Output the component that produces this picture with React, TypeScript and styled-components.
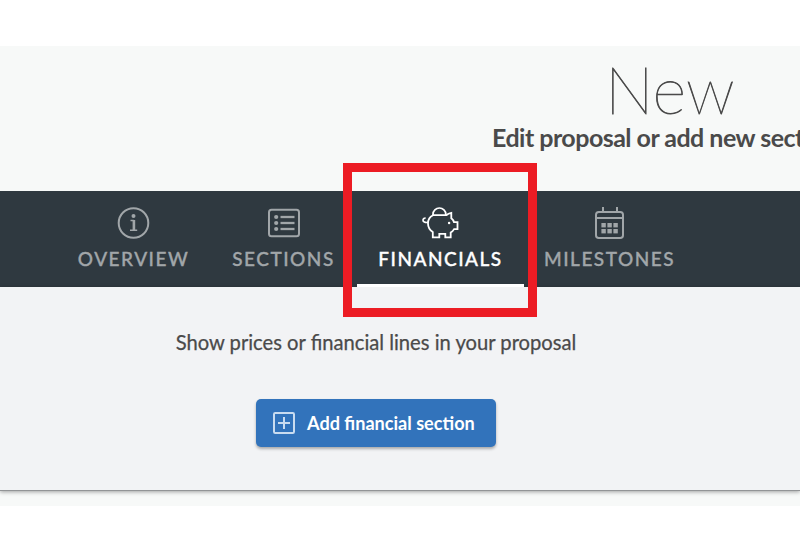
import React from "react";
import styled, { createGlobalStyle } from "styled-components";

const GlobalStyle = createGlobalStyle`
  * { box-sizing: border-box; }
  body { margin: 0; background: #fff; overflow: hidden; font-family: Lato, sans-serif; color: #4a4a4a; }
`;

const Page = styled.div`
  position: relative;
  width: 800px;
  height: 544px;
  padding: 46px 0 38px;
  overflow: hidden;
`;

const Proposal = styled.main`
  height: 460px;
  background: #f7f9f8;
`;

const Header = styled.header`
  height: 145px;
  padding-top: 10px;
  overflow: hidden;
`;

const Title = styled.h1`
  margin: 0 0 0 605px;
  font-size: 65px;
  line-height: 66px;
  font-weight: 100;
  color: #4a4a4a;
  -webkit-text-stroke: 0.8px #4a4a4a;
`;

const Subtitle = styled.p`
  margin: 0 0 0 492px;
  font-size: 25px;
  line-height: 30px;
  font-weight: 700;
  letter-spacing: -0.52px;
  white-space: nowrap;
`;

const Nav = styled.nav`
  display: flex;
  height: 96px;
  padding-left: 57px;
  background: #2f3940;
`;

const Tab = styled.a<{ $width: number; $active?: boolean }>`
  display: flex;
  flex-direction: column;
  align-items: center;
  width: ${(p) => p.$width}px;
  padding-top: 14px;
  border-bottom: 3px solid ${(p) => (p.$active ? "#fff" : "transparent")};
  color: ${(p) => (p.$active ? "#fff" : "#a1a6a9")};
`;

const TabIcon = styled.svg`
  width: 40px;
  height: 36px;
  fill: none;
  stroke: currentColor;
  stroke-width: 2;
`;

const TabLabel = styled.span`
  margin-top: 6px;
  font-size: 19px;
  line-height: 24px;
  font-weight: 500;
  letter-spacing: 1.5px;
  -webkit-text-stroke: 0.35px currentColor;
  white-space: nowrap;
`;

const Panel = styled.section`
  display: flex;
  flex-direction: column;
  align-items: center;
  height: 204px;
  padding: 43px 48px 0 0;
  background: #f2f3f5;
  border-bottom: 1px solid #929496;
  box-shadow: 0 1px 4px rgba(0, 0, 0, 0.35);
`;

const Hint = styled.p`
  margin: 0 0 44px;
  font-size: 20.2px;
  line-height: 25px;
  -webkit-text-stroke: 0.25px currentColor;
  white-space: nowrap;
`;

const AddButton = styled.button`
  display: flex;
  align-items: center;
  gap: 12px;
  width: 240px;
  height: 48px;
  padding: 0 0 0 17px;
  border: 0;
  border-radius: 5px;
  background: #3273bb;
  box-shadow: 0 2px 3px rgba(0, 0, 0, 0.3);
  color: #fff;
  font: 700 18.1px/24px Lato, sans-serif;
  white-space: nowrap;
`;

const PlusIcon = styled.svg`
  width: 22px;
  height: 22px;
  fill: none;
  stroke: #c9dcf0;
  stroke-width: 2;
`;

const Highlight = styled.div`
  position: absolute;
  left: 343px;
  top: 163px;
  width: 194px;
  height: 154px;
  border: 9px solid #ec1c24;
  pointer-events: none;
`;

const InfoGlyph = () => (
  <TabIcon viewBox="0 0 40 36">
    <circle cx="19.5" cy="18" r="14.8" />
    <circle cx="19.5" cy="11" r="2" fill="currentColor" stroke="none" />
    <path strokeWidth="2.6" d="M19.9 15v10.5" />
    <path strokeWidth="1.6" d="M16.5 15.5h3.4M16 25.2h7.2" />
  </TabIcon>
);

const ListGlyph = () => (
  <TabIcon viewBox="0 0 40 36">
    <rect x="5" y="4.7" width="30" height="26.6" rx="2.5" />
    {[12, 18, 24].map((y) => (
      <g key={y}>
        <circle cx="12.2" cy={y} r="2.1" fill="currentColor" stroke="none" />
        <path strokeWidth="2.3" d={`M16.5 ${y}h14`} />
      </g>
    ))}
  </TabIcon>
);

const PiggyGlyph = () => (
  <TabIcon viewBox="0 0 40 36">
    <path strokeWidth="1.8" d="M12 10.2h13.2q2.2-1.9 5.1-2.4v5.4q2 1.6 2.7 4h3.5v6.9h-3.4q-1.2 2.1-3.4 3.4v4.8h-5.4v-3.4h-6v3.4h-6.5v-5.2Q7 23.7 7 18.4q0-5.9 5-8.2Z" />
    <path strokeWidth="1.7" d="M12 10.2v-1a6.4 6.2 0 0 1 12.8 0v1M7 17.4c-3 .5-5.1-.7-5-2.4.1-1.5 1.4-2 2.6-1.9" />
    <circle cx="28.1" cy="18" r="1.2" fill="currentColor" stroke="none" />
  </TabIcon>
);

const CalendarGlyph = () => (
  <TabIcon viewBox="0 0 40 36">
    <rect x="6" y="7" width="27" height="26" rx="2.8" />
    <path d="M13 2v5M27 2v5M6 13h27" />
    {[18, 24].map((y) =>
      [11.4, 17.4, 23.4].map((x) => (
        <rect key={`${x}-${y}`} x={x} y={y} width="4.4" height="4.4" fill="currentColor" stroke="none" />
      ))
    )}
  </TabIcon>
);

const tabs = [
  { label: "OVERVIEW", width: 153, Icon: InfoGlyph },
  { label: "SECTIONS", width: 147, Icon: ListGlyph },
  { label: "FINANCIALS", width: 167, Icon: PiggyGlyph, active: true },
  { label: "MILESTONES", width: 171, Icon: CalendarGlyph },
];

export default function App() {
  return (
    <Page>
      <GlobalStyle />
      <Proposal>
        <Header>
          <Title>New</Title>
          <Subtitle>Edit proposal or add new sect</Subtitle>
        </Header>
        <Nav>
          {tabs.map(({ label, width, Icon, active }) => (
            <Tab key={label} $width={width} $active={active}>
              <Icon />
              <TabLabel>{label}</TabLabel>
            </Tab>
          ))}
        </Nav>
        <Panel>
          <Hint>Show prices or financial lines in your proposal</Hint>
          <AddButton type="button">
            <PlusIcon viewBox="0 0 22 22">
              <rect x="1" y="1" width="20" height="20" rx="1.2" />
              <path d="M11 5v12M5 11h12" />
            </PlusIcon>
            <span>Add financial section</span>
          </AddButton>
        </Panel>
      </Proposal>
      <Highlight />
    </Page>
  );
}
